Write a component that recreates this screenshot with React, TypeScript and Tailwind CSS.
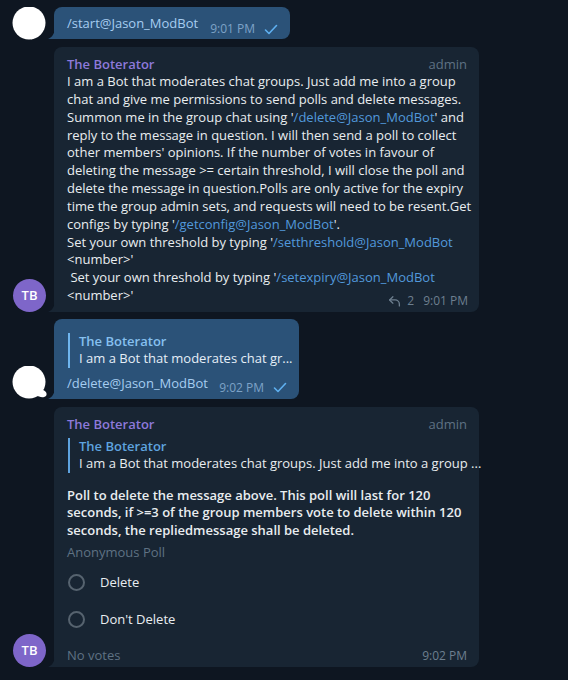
import React from 'react'

const Tail = ({ color }: { color: string }) => (
  <svg className="absolute bottom-0 -left-[6px]" width="7" height="10" viewBox="0 0 7 10">
    <path d="M7 0 V10 H0 C3 9 6 6 7 0 Z" fill={color} />
  </svg>
)

const WhiteAvatar = ({ alt }: { alt?: boolean }) => (
  <svg width="38" height="33" viewBox="0 0 38 33" className="block">
    <circle cx="17" cy="16" r="16.5" fill="#fff" />
    {alt ? (
      <path d="M26 23 C33 23 36 27 34 30 C31 32.5 27 31 24 29 Z" fill="#fff" />
    ) : (
      <path d="M16 30 C18 33 21 33 23 30 Z" fill="#fff" />
    )}
  </svg>
)

const TB = () => (
  <div className="w-[33px] h-[33px] rounded-full bg-[#7e66c9] flex items-center justify-center text-white text-[13px] font-semibold">
    TB
  </div>
)

const Check = () => (
  <svg width="14" height="11" viewBox="0 0 14 11" className="ml-[9px]">
    <path d="M1.5 6 L5 9.5 L12.5 1.5" fill="none" stroke="#5fb0f0" strokeWidth="1.6" strokeLinecap="round" strokeLinejoin="round" />
  </svg>
)

const ReplyIcon = () => (
  <svg width="13" height="12" viewBox="0 0 24 22" fill="none" stroke="#6d7f8f" strokeWidth="2.4" strokeLinecap="round" strokeLinejoin="round">
    <polyline points="9 15 3 9 9 3" />
    <path d="M21 20v-3a8 8 0 0 0-8-8H3" />
  </svg>
)

const Link = ({ children }: { children: React.ReactNode }) => (
  <span className="text-[#5299dc]">{children}</span>
)

const Radio = ({ label }: { label: string }) => (
  <div className="h-[37px] flex items-center">
    <span className="w-[17px] h-[17px] rounded-full border-2 border-[#56636f] ml-[1px]" />
    <span className="ml-[15px] text-[#e9edf0]">{label}</span>
  </div>
)

export default function App() {
  return (
    <div className="w-[568px] h-[680px] bg-[#0e1621] overflow-hidden pt-[7px] font-['Open_Sans',sans-serif] text-[13px] text-[#e9edf0]">
      {/* outgoing command */}
      <div className="flex items-end">
        <div className="w-[54px] pl-[12px] mb-[-1px]">
          <WhiteAvatar />
        </div>
        <div className="relative bg-[#2b5278] rounded-[8px] rounded-bl-none pl-[13px] pr-[12px] pt-[7px] pb-[3px] flex items-end">
          <Tail color="#2b5278" />
          <span className="leading-[18px] mb-[4px] text-[#a6cdf1]">/start@Jason_ModBot</span>
          <span className="ml-[12px] text-[12px] leading-[14px] text-[#7ea3c7] flex items-center">
            9:01 PM
            <Check />
          </span>
        </div>
      </div>

      {/* bot help */}
      <div className="flex items-end mt-[8px]">
        <div className="w-[54px] pl-[13px]">
          <TB />
        </div>
        <div className="relative w-[425px] bg-[#182533] rounded-[8px] rounded-bl-none pl-[13px] pr-[12px] pt-[8px] pb-[7px]">
          <Tail color="#182533" />
          <div className="flex justify-between leading-[18px]">
            <span className="font-semibold text-[#8d79da]">The Boterator</span>
            <span className="text-[#5f7283]">admin</span>
          </div>
          <div className="leading-[17.85px] whitespace-pre">
            <div>I am a Bot that moderates chat groups. Just add me into a group</div>
            <div>chat and give me permissions to send polls and delete messages.</div>
            <div>Summon me in the group chat using '<Link>/delete@Jason_ModBot</Link>' and</div>
            <div>reply to the message in question. I will then send a poll to collect</div>
            <div>other members' opinions. If the number of votes in favour of</div>
            <div>deleting the message &gt;= certain threshold, I will close the poll and</div>
            <div>delete the message in question.Polls are only active for the expiry</div>
            <div>time the group admin sets, and requests will need to be resent.Get</div>
            <div>configs by typing '<Link>/getconfig@Jason_ModBot</Link>'.</div>
            <div>Set your own threshold by typing '<Link>/setthreshold@Jason_ModBot</Link></div>
            <div>&lt;number&gt;'</div>
            <div> Set your own threshold by typing '<Link>/setexpiry@Jason_ModBot</Link></div>
            <div className="flex justify-between items-end">
              <span>&lt;number&gt;'</span>
              <span className="flex items-center gap-[6px] text-[12px] leading-[14px] text-[#6d7f8f] translate-y-[3px] mr-[-1px]">
                <ReplyIcon />
                <span>2</span>
                <span className="ml-[3px]">9:01 PM</span>
              </span>
            </div>
          </div>
        </div>
      </div>

      {/* outgoing reply */}
      <div className="flex items-end mt-[7px]">
        <div className="w-[54px] pl-[12px]">
          <WhiteAvatar alt />
        </div>
        <div className="relative w-[245px] bg-[#2b5278] rounded-[8px] rounded-bl-none pl-[13px] pr-[12px] pt-[14px] pb-[4px]">
          <Tail color="#2b5278" />
          <div className="border-l-2 border-[#6fb5ee] pl-[9px] ml-[1px] leading-[17.5px]">
            <div className="font-semibold text-[#86c0ef]">The Boterator</div>
            <div className="text-[#e5eef7] whitespace-nowrap">I am a Bot that moderates chat gr...</div>
          </div>
          <div className="flex items-end justify-between mt-[6px]">
            <span className="leading-[18px] mb-[3px] text-[#a6cdf1]">/delete@Jason_ModBot</span>
            <span className="text-[12px] leading-[14px] text-[#7ea3c7] flex items-center">
              9:02 PM
              <Check />
            </span>
          </div>
        </div>
      </div>

      {/* poll */}
      <div className="flex items-end mt-[8px]">
        <div className="w-[54px] pl-[13px]">
          <TB />
        </div>
        <div className="relative w-[425px] bg-[#182533] rounded-[8px] rounded-bl-none pl-[13px] pr-[12px] pt-[8px] pb-[3px]">
          <Tail color="#182533" />
          <div className="flex justify-between leading-[18px]">
            <span className="font-semibold text-[#8d79da]">The Boterator</span>
            <span className="text-[#5f7283]">admin</span>
          </div>
          <div className="mt-[5px] border-l-2 border-[#5ea3df] pl-[9px] ml-[1px] leading-[17.5px]">
            <div className="font-semibold text-[#5ea3df]">The Boterator</div>
            <div className="whitespace-nowrap">I am a Bot that moderates chat groups. Just add me into a group ...</div>
          </div>
          <div className="mt-[14px] font-semibold leading-[17.5px] whitespace-nowrap">
            <div>Poll to delete the message above. This poll will last for 120</div>
            <div>seconds, if &gt;=3 of the group members vote to delete within 120</div>
            <div>seconds, the repliedmessage shall be deleted.</div>
          </div>
          <div className="mt-[5px] leading-[17.5px] text-[#5f7283]">Anonymous Poll</div>
          <div className="mt-[2px]">
            <Radio label="Delete" />
            <Radio label="Don't Delete" />
          </div>
          <div className="mt-[8px] flex justify-between items-center leading-[18px] text-[#5f7283]">
            <span>No votes</span>
            <span className="text-[12px] text-[#6d7f8f] translate-y-[1px]">9:02 PM</span>
          </div>
        </div>
      </div>
    </div>
  )
}
